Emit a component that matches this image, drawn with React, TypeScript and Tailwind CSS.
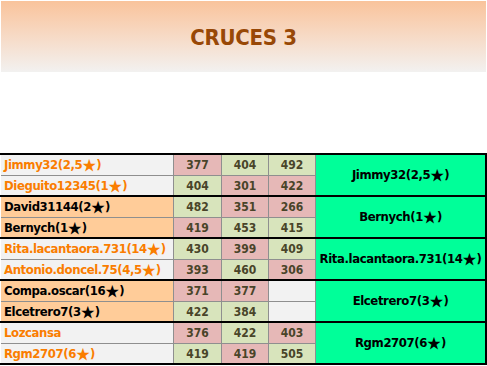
import React from "react";

const PINK = "bg-[#e6b8b7]";
const GREEN = "bg-[#d8e4bc]";
const EMPTY = "bg-[#f2f2f2]";

type Row = { name: string; scores: (number | null)[]; colors: string[] };
type Group = { orange: boolean; rows: Row[]; winner: string };

const groups: Group[] = [
  {
    orange: true,
    winner: "Jimmy32(2,5|)",
    rows: [
      { name: "Jimmy32(2,5|)", scores: [377, 404, 492], colors: [PINK, GREEN, GREEN] },
      { name: "Dieguito12345(1|)", scores: [404, 301, 422], colors: [GREEN, PINK, PINK] },
    ],
  },
  {
    orange: false,
    winner: "Bernych(1|)",
    rows: [
      { name: "David31144(2|)", scores: [482, 351, 266], colors: [GREEN, PINK, PINK] },
      { name: "Bernych(1|)", scores: [419, 453, 415], colors: [PINK, GREEN, GREEN] },
    ],
  },
  {
    orange: true,
    winner: "Rita.lacantaora.731(14|)",
    rows: [
      { name: "Rita.lacantaora.731(14|)", scores: [430, 399, 409], colors: [GREEN, PINK, GREEN] },
      { name: "Antonio.doncel.75(4,5|)", scores: [393, 460, 306], colors: [PINK, GREEN, PINK] },
    ],
  },
  {
    orange: false,
    winner: "Elcetrero7(3|)",
    rows: [
      { name: "Compa.oscar(16|)", scores: [371, 377, null], colors: [PINK, PINK, EMPTY] },
      { name: "Elcetrero7(3|)", scores: [422, 384, null], colors: [GREEN, GREEN, EMPTY] },
    ],
  },
  {
    orange: true,
    winner: "Rgm2707(6|)",
    rows: [
      { name: "Lozcansa", scores: [376, 422, 403], colors: [PINK, GREEN, PINK] },
      { name: "Rgm2707(6|)", scores: [419, 419, 505], colors: [GREEN, PINK, GREEN] },
    ],
  },
];

function Label({ text }: { text: string }) {
  const parts = text.split("|");
  if (parts.length === 1) return <>{text}</>;
  return (
    <>
      {parts[0]}
      <span className="font-['Noto_Sans_CJK_JP',sans-serif] text-[14px] leading-none tracking-normal relative top-[-1px]">★</span>
      {parts[1]}
    </>
  );
}

const FONT = "font-['DejaVu_Sans_Condensed','DejaVu_Sans',sans-serif] [font-stretch:condensed]";

export default function App() {
  return (
    <div className={`w-[487px] h-[366px] bg-white overflow-hidden ${FONT}`}>
      <div className="mx-px mt-px h-[71px] bg-gradient-to-b from-[#f9c39b] to-[#f2f1f0] flex items-center justify-center">
        <span className="text-[22px] font-bold text-[#984806] leading-none pt-[2px] tracking-[-0.3px]">CRUCES 3</span>
      </div>
      <div className="mt-[81px] border-t-2 border-black">
        {groups.map((g, gi) => (
          <div key={gi} className="pl-px bg-white border-b-2 border-black">
            <div className="grid grid-cols-[172px_47px_46px_46px_169px] grid-rows-[20px_19px] gap-px bg-[#8f8f8f] border-r-2 border-black">
              {g.rows.map((r, ri) => (
                <React.Fragment key={ri}>
                  <div
                    className={`flex items-center pl-[3px] text-[13px] font-bold whitespace-nowrap tracking-[-0.4px] ${
                      g.orange ? "bg-[#f2f2f2] text-[#fa7d00]" : "bg-[#ffcc99] text-black"
                    }`}
                    style={{ gridRow: ri + 1, gridColumn: 1 }}
                  >
                    <Label text={r.name} />
                  </div>
                  {r.scores.map((s, si) => (
                    <div
                      key={si}
                      className={`flex items-center justify-center text-[12px] font-bold text-[#494429] ${r.colors[si]}`}
                      style={{ gridRow: ri + 1, gridColumn: si + 2 }}
                    >
                      {s ?? ""}
                    </div>
                  ))}
                </React.Fragment>
              ))}
              <div
                className="bg-[#00ff99] flex items-center justify-center text-[13px] font-bold text-black whitespace-nowrap tracking-[-0.4px]"
                style={{ gridRow: "1 / span 2", gridColumn: 5 }}
              >
                <Label text={g.winner} />
              </div>
            </div>
          </div>
        ))}
      </div>
    </div>
  );
}
